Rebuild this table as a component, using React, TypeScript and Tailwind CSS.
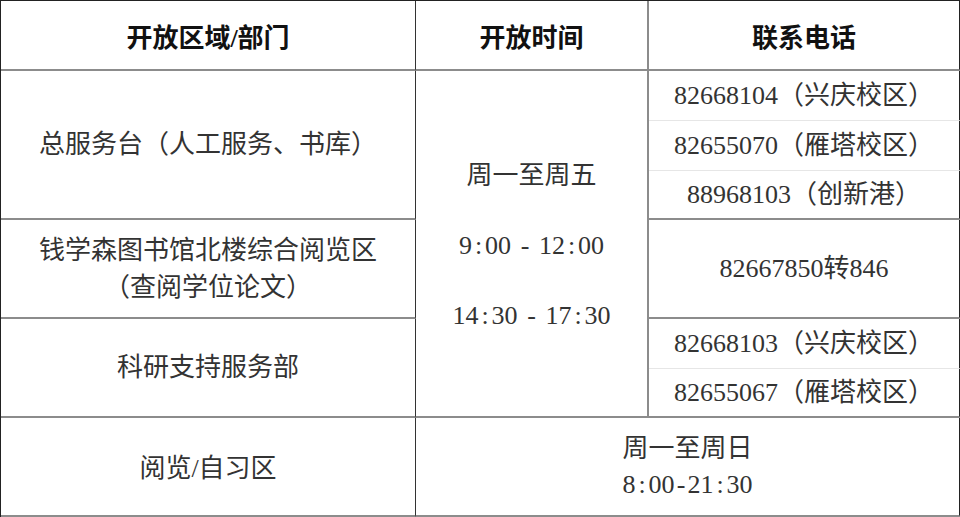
const font = { fontFamily: '"Liberation Serif", "Noto Sans CJK SC", serif' };

// SimSun-like half-width ASCII: give punctuation the same width as digits
function Num({ s }: { s: string }) {
  return (
    <>
      {s.split("").map((c, i) =>
        /[0-9]/.test(c) ? (
          c
        ) : (
          <span key={i} className="inline-block w-[0.5em] text-center">
            {c}
          </span>
        )
      )}
    </>
  );
}

function Phone({ num, note, last }: { num: string; note: string; last?: boolean }) {
  return (
    <div
      className={`flex items-center justify-center border-r-2 border-r-[#222] border-b ${
        last ? "border-b-2 border-b-[#8c8c8c]" : "border-b-[#e6e6e6]"
      }`}
    >
      <span>
        <Num s={num} />
        {note}
      </span>
    </div>
  );
}

export default function App() {
  return (
    <div className="w-[960px] h-[517px] bg-white text-[26px] text-[#333]" style={font}>
      <div className="grid grid-cols-[415px_233px_312px] grid-rows-[70px_50px_50px_49px_99px_50px_49px_99px] border-t border-l border-[#222]">
        {/* header */}
        <div className="flex items-center justify-center pt-[6px] font-bold text-[#111] border-r border-r-[#333] border-b-2 border-b-[#8c8c8c]">
          开放区域/部门
        </div>
        <div className="flex items-center justify-center pt-[6px] font-bold text-[#111] border-r-2 border-r-[#8c8c8c] border-b-2 border-b-[#8c8c8c]">
          开放时间
        </div>
        <div className="flex items-center justify-center pt-[6px] font-bold text-[#111] border-r-2 border-r-[#222] border-b-2 border-b-[#8c8c8c]">
          联系电话
        </div>

        {/* column 1 */}
        <div className="col-start-1 row-start-2 row-span-3 flex items-center justify-center border-r border-r-[#333] border-b-2 border-b-[#8c8c8c]">
          总服务台（人工服务、书库）
        </div>
        <div className="col-start-1 row-start-5 flex flex-col items-center justify-center leading-[37px] border-r border-r-[#333] border-b-2 border-b-[#8c8c8c]">
          <span>钱学森图书馆北楼综合阅览区</span>
          <span>（查阅学位论文）</span>
        </div>
        <div className="col-start-1 row-start-6 row-span-2 flex items-center justify-center border-r border-r-[#333] border-b-2 border-b-[#8c8c8c]">
          科研支持服务部
        </div>
        <div className="col-start-1 row-start-8 flex items-center justify-center pt-[4px] border-r border-r-[#333] border-b-2 border-b-[#8c8c8c]">
          阅览/自习区
        </div>

        {/* column 2 */}
        <div className="col-start-2 row-start-2 row-span-6 flex flex-col items-center justify-center gap-[34px] pt-[5px] leading-[36px] border-r-2 border-r-[#8c8c8c] border-b-2 border-b-[#8c8c8c]">
          <span>周一至周五</span>
          <span className="flex">
            <Num s="9:00" />
            <span className="w-[28px] text-center">-</span>
            <Num s="12:00" />
          </span>
          <span className="flex">
            <Num s="14:30" />
            <span className="w-[28px] text-center">-</span>
            <Num s="17:30" />
          </span>
        </div>

        {/* column 3 */}
        <Phone num="82668104" note="（兴庆校区）" />
        <Phone num="82655070" note="（雁塔校区）" />
        <Phone num="88968103" note="（创新港）" last />
        <div className="flex items-center justify-center border-r-2 border-r-[#222] border-b-2 border-b-[#8c8c8c]">
          <span>
            <Num s="82667850" />转<Num s="846" />
          </span>
        </div>
        <Phone num="82668103" note="（兴庆校区）" />
        <Phone num="82655067" note="（雁塔校区）" last />

        {/* bottom merged */}
        <div className="col-start-2 col-span-2 row-start-8 flex flex-col items-center justify-center leading-[36px] border-r-2 border-r-[#222] border-b-2 border-b-[#8c8c8c]">
          <span>周一至周日</span>
          <span>
            <Num s="8:00-21:30" />
          </span>
        </div>
      </div>
    </div>
  );
}
